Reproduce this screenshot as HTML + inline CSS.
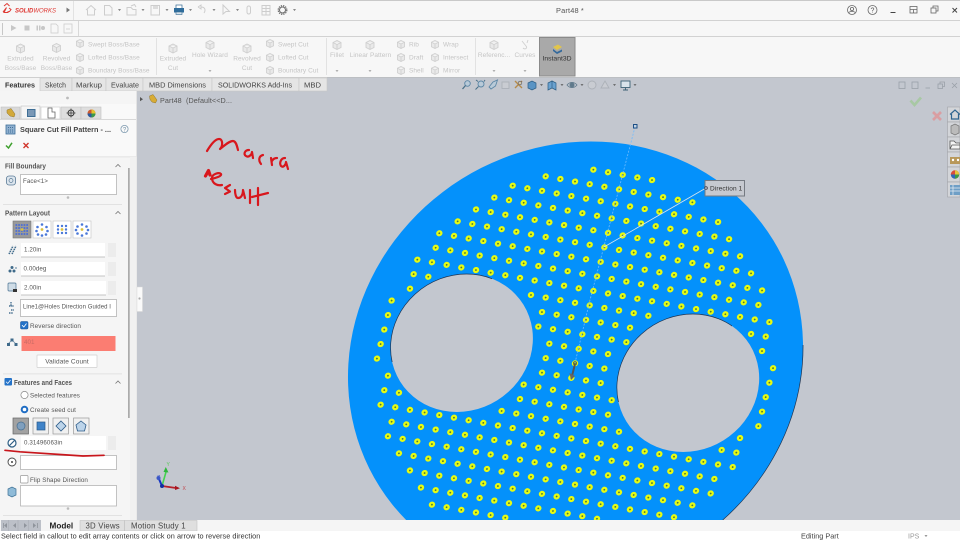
<!DOCTYPE html>
<html lang="en">
<head>
<meta charset="utf-8">
<title>Part48 - SOLIDWORKS</title>
<style>
html,body{margin:0;padding:0;width:960px;height:540px;overflow:hidden;background:#f6f6f6}
svg{display:block;position:absolute;left:0;top:0;filter:blur(.3px)}
text{font-family:"Liberation Sans",sans-serif;white-space:pre}
.r{font-size:6.500px;fill:#c5c5c5;letter-spacing:.05px}
.m{text-anchor:middle}
.tab{font-size:7.300px;fill:#444}
.b{font-size:7px;font-weight:bold;fill:#555}
.p{font-size:6.200px;fill:#555;letter-spacing:.08px}
.box{fill:#fff;stroke:#b4b4b4;stroke-width:.8}
.ic{fill:#e9e9e9;stroke:#cfcfcf;stroke-width:.9}
.hu{fill:#b9cad8;stroke:#5d87a6;stroke-width:.9}
.hg{fill:#c9ccd2;stroke:#acb1b8;stroke-width:.9}
.tb{fill:none;stroke:#cdcdcd;stroke-width:1}
.hand{fill:none;stroke:#d8171d;stroke-width:2.200;stroke-linecap:round;stroke-linejoin:round}
</style>
</head>
<body>
<svg width="960" height="540" viewBox="0 0 960 540" xmlns="http://www.w3.org/2000/svg">
<defs>
<path id="c" class="ic" d="M-4-2 0-4 4-2V3L0 5-4 3ZM-4-2 0 0 4-2M0 0V5"/>
<path id="arr" d="M-1.500-.8H1.500L0 .9Z"/>
<path id="lat" d="M5-2H9.010M2-1H12.010M0 0H14.010M-1 1H15.010M-2 2H16.010M-3 3H17.010M-4 4H18.010M-4 5H18.010M-5 6H19.010M-5 7H-3.990M3 7H11.010M18 7H19.010M-5 8h.01M4 8H10.010M19 8h.01M-6 9h.01M4 9H10.010M20 9h.01M-6 10h.01M5 10H9.010M20 10h.01M-6 11h.01M5 11H9.010M20 11h.01M-6 12h.01M5 12H9.010M20 12h.01M-6 13h.01M4 13H10.010M20 13h.01M-5 14h.01M4 14H10.010M19 14h.01M-5 15H-3.990M3 15H11.010M18 15H19.010M-5 16H19.010M-4 17H18.010M-4 18H18.010M-3 19H17.010M-2 20H16.010M-1 21H11.010M0 22H5.010" fill="none" stroke-linecap="round" stroke-dasharray=".001 .999"/>
<clipPath id="c1"><rect x="380" y="260" width="112" height="102"/></clipPath>
<clipPath id="c2"><rect x="610" y="305" width="122" height="97"/></clipPath>
<clipPath id="c3"><rect x="715" y="345" width="95" height="175"/></clipPath>
</defs>

<!-- window background -->
<rect width="960" height="540" fill="#f7f7f7"/>

<!-- viewport -->
<rect x="137" y="77" width="823" height="443" fill="#c3c7cf"/>
<g transform="matrix(1 0 -0.07 1 25.34 0)">
<path d="M417.200 520A227 220.500 0 1 1 733.800 520Z" fill="#0491fb"/>
<ellipse cx="460.400" cy="343" rx="71" ry="69" fill="#c3c7cf"/>
<ellipse cx="689.500" cy="383" rx="71" ry="69" fill="#c3c7cf"/>
</g>
<g clip-path="url(#c1)"><g transform="matrix(1 0 -0.07 1 25.34 0)"><ellipse cx="460.400" cy="343" rx="71" ry="69" fill="none" stroke="#1f3350" stroke-width=".7"/></g></g>
<g clip-path="url(#c2)"><g transform="matrix(1 0 -0.07 1 25.34 0)"><ellipse cx="689.500" cy="383" rx="71" ry="69" fill="none" stroke="#1f3350" stroke-width=".7"/></g></g>
<g clip-path="url(#c3)"><g transform="matrix(1 0 -0.07 1 25.34 0)"><path d="M417.200 520A227 220.500 0 1 1 733.800 520" fill="none" stroke="#1f3350" stroke-width=".7"/></g></g>
<g transform="matrix(14.67 2.6 -3.67 14.5 512.67 185.67)">
<use href="#lat" stroke="#e6fb12" stroke-width=".42"/>
<use href="#lat" stroke="#4f7a3a" stroke-width=".12"/>
</g>

<!-- direction handles -->
<path d="M635 127 590 300 575 363" fill="none" stroke="#70bcff" stroke-width=".8" stroke-dasharray="2 1.5"/>
<rect x="633.500" y="124.500" width="3.500" height="3.500" fill="#c3d4e4" stroke="#1d4f86"/>
<path d="M604 247 706 188" stroke="#d8e4ee" stroke-width=".8"/>
<rect x="705" y="180.500" width="39.500" height="15.500" fill="#c6c9d0" stroke="#757a82"/>
<circle cx="706" cy="188" r="1.300" fill="#fff" stroke="#445"/>
<text x="710" y="190.500" font-size="6.500" fill="#333" letter-spacing=".12">Direction 1</text>
<path d="M575 364 572 376" stroke="#555" stroke-width="2"/>
<path d="M569.500 373 575 376 571 380Z" fill="#666"/>
<circle cx="575" cy="363.300" r="1.600" fill="none" stroke="#555" stroke-width=".8"/>

<!-- handwriting -->
<g class="hand">
<path d="M207 151C210 146 215 139 219 139C223 139 223 146 220 149C224 146 229 141 233 141C236 141 237 146 238 150"/>
<path d="M249 150C245 150 243 154 246 156C249 158 252 154 252 152L253 158"/>
<path d="M263 155C259 156 258 160 261 164"/>
<path d="M271 158 272 165M272 161C273 159 275 158 277 158"/>
<path d="M285 158C281 158 279 163 281 166C283 168 286 165 286 162L288 169"/>
<path d="M205.500 176 208.500 170.500 210 175" stroke-width="3.200"/>
<path d="M211 179C216 178 222 176 221 174C219 172 212 174 212 178C212 184 218 186 222 185"/>
<path d="M230 185 225 188 230 191.500 225 194"/>
<path d="M235 190C235 194 236 198 238 198C241 198 243 195 243 190L245 198"/>
<path d="M250 190 250 203"/>
<path d="M258 188 258 205M252 197 268 193"/>
</g>

<!-- triad -->
<path d="M162 486 166 472" stroke="#44d24f" stroke-width="1.600"/>
<path d="M163.500 472 168.500 472.500 165.800 467Z" fill="#2fb63c"/>
<path d="M162 486 176 488" stroke="#b6202a" stroke-width="1.800"/>
<path d="M175 485.800 180 488.300 175 490Z" fill="#a81620"/>
<path d="M162 486 159 479" stroke="#1636c4" stroke-width="2"/>
<circle cx="162" cy="486" r="2" fill="#1130a0"/>
<circle cx="158.500" cy="478" r="2" fill="#3c58c8"/>
<text x="166.500" y="466" font-size="5" fill="#5ac85a">Y</text>
<text x="182.500" y="490" font-size="5" fill="#c0454a">X</text>
<text x="157" y="479" font-size="5" fill="#3c58c8">Z</text>

<!-- top lines -->
<rect width="960" height="1" fill="#c9c9c9"/>
<rect y="20" width="960" height="1" fill="#d2d2d2"/>
<rect y="36" width="960" height="1" fill="#d2d2d2"/>
<rect x="73" y="1" width="1" height="19" fill="#e2e2e2"/>
<rect x="78" y="21" width="1" height="15" fill="#d8d8d8"/>

<!-- logo -->
<g fill="none" stroke="#df3a33" stroke-width="1">
<path d="M4 6 7 3.500 9.500 6M3 12 6.500 7.500 4 12.500H8.500M9 8 11 9.500 9.500 11.500 7.500 11.800"/>
</g>
<text x="15" y="12.500" font-size="6.600" font-weight="bold" font-style="italic" fill="#de3530" textLength="41" lengthAdjust="spacingAndGlyphs">SOLID<tspan font-weight="normal">WORKS</tspan></text>
<path d="M66.500 7.500 70 10 66.500 12.500Z" fill="#777"/>

<!-- quick access icons -->
<g class="tb">
<path d="M86 10 91 5.500 96 10M87.500 9.500V15H94.500V9.500"/>
<path d="M104.500 5.500H109.500L112 8V15H104.500Z"/>
<path d="M127 7.500H131L133 9.500H136V15H127ZM131 6 134.500 4.500 136 7"/>
<rect x="151" y="5.500" width="8.500" height="9.500"/>
<path d="M198 7 201 5 201 9 198 7M201 7C205 7 206 10 204 13"/>
<path d="M223 5 223 14 226 11.500 229.500 11.500Z"/>
<rect x="247" y="6" width="3.500" height="8" rx="1.700"/>
<path d="M262 5.500H270V15H262ZM262 8.500H270M262 11.500H270M266 5.500V15"/>
</g>
<g fill="#dcdcdc"><rect x="153" y="6" width="5" height="3"/></g>
<g fill="#666">
<use href="#arr" x="119.500" y="10"/><use href="#arr" x="143" y="10"/><use href="#arr" x="167" y="10"/>
<use href="#arr" x="190.500" y="10"/><use href="#arr" x="214" y="10"/><use href="#arr" x="237.500" y="10"/><use href="#arr" x="294.500" y="10"/>
</g>
<g>
<rect x="176" y="5" width="6" height="3.500" fill="#fff" stroke="#356a92" stroke-width=".7"/>
<rect x="174" y="8" width="10" height="4.500" fill="#2f6d9c"/>
<rect x="176" y="12" width="6" height="2.500" fill="#d7e3ec" stroke="#356a92" stroke-width=".6"/>
</g>
<circle cx="282.500" cy="10" r="3" fill="none" stroke="#666" stroke-width="1"/>
<circle cx="282.500" cy="10" r="4.300" fill="none" stroke="#666" stroke-width="1.200" stroke-dasharray="1.300 1"/>

<text x="570" y="13" class="m" font-size="7.400" fill="#555" letter-spacing=".15">Part48 *</text>

<!-- window controls -->
<g fill="none" stroke="#666" stroke-width=".8">
<circle cx="852" cy="10" r="4.500"/><circle cx="852" cy="9" r="1.600"/><path d="M849 12.500C850 11 854 11 855 12.500"/>
<circle cx="872.500" cy="10" r="4.500"/>
<rect x="910" y="6.500" width="7" height="6.500"/><path d="M910 9.500H917M913.500 9.500V13"/>
<rect x="931" y="8" width="5" height="5"/><path d="M933 8V6H938V11H936"/>
</g>
<text x="872.500" y="12.500" class="m" font-size="7" fill="#555">?</text>
<rect x="890.500" y="12" width="5" height="1" fill="#444"/>
<path d="M952.500 8 957 12.500M957 8 952.500 12.500" stroke="#444" stroke-width="1"/>

<!-- toolbar 2 -->
<rect x="2" y="23" width=".8" height="12" fill="#bbb"/>
<g fill="#c7c7c7">
<path d="M11 25 16.500 28 11 31Z"/><rect x="24.500" y="25.500" width="5" height="5"/>
<rect x="36.500" y="25.500" width="1.500" height="5"/><rect x="39" y="25.500" width="1.500" height="5"/><circle cx="43" cy="28" r="2"/>
</g>
<g fill="none" stroke="#ccc" stroke-width=".8">
<path d="M51 24H56L58 26V33H51Z"/><path d="M64 24H72V33H64ZM66 29 70 29"/>
</g>

<!-- ribbon separators and bottom -->
<rect y="77" x="0" width="327" height="1" fill="#cfcfcf"/>
<rect y="77" x="327" width="633" height="1" fill="#bcbfc3"/>
<rect x="156" y="38" width="1" height="37" fill="#e2e2e2"/>
<rect x="475" y="38" width="1" height="37" fill="#e2e2e2"/>
<rect x="326" y="38" width="1" height="37" fill="#e2e2e2"/>

<!-- ribbon icons -->
<use href="#c" x="20.500" y="48"/><use href="#c" x="56.500" y="47.500"/>
<use href="#c" transform="translate(80 43) scale(.9)"/><use href="#c" transform="translate(80 57) scale(.9)"/><use href="#c" transform="translate(80 70) scale(.9)"/>
<use href="#c" x="173" y="48"/><use href="#c" x="210" y="44.500"/><use href="#c" x="247" y="48"/>
<use href="#c" transform="translate(270 43) scale(.9)"/><use href="#c" transform="translate(270 57) scale(.9)"/><use href="#c" transform="translate(270 70) scale(.9)"/>
<use href="#c" x="337" y="44.500"/><use href="#c" x="370" y="44.500"/>
<use href="#c" transform="translate(401 44) scale(.9)"/><use href="#c" transform="translate(401 57) scale(.9)"/><use href="#c" transform="translate(401 70) scale(.9)"/>
<use href="#c" transform="translate(435 44) scale(.9)"/><use href="#c" transform="translate(435 57) scale(.9)"/><use href="#c" transform="translate(435 70) scale(.9)"/>
<use href="#c" x="494" y="44.500"/>
<path d="M522 41 526 46C528 48 525 50 523 48M528 40 527 43" fill="none" stroke="#cfcfcf" stroke-width=".9"/>

<!-- ribbon text -->
<text x="20.500" y="60.500" class="r m">Extruded</text><text x="20.500" y="70" class="r m">Boss/Base</text>
<text x="56.500" y="60.500" class="r m">Revolved</text><text x="56.500" y="70" class="r m">Boss/Base</text>
<text x="88" y="46.500" class="r">Swept Boss/Base</text><text x="88" y="59.500" class="r">Lofted Boss/Base</text><text x="88" y="72.500" class="r">Boundary Boss/Base</text>
<text x="173" y="60.500" class="r m">Extruded</text><text x="173" y="70" class="r m">Cut</text>
<text x="210" y="57" class="r m">Hole Wizard</text>
<text x="247" y="60.500" class="r m">Revolved</text><text x="247" y="70" class="r m">Cut</text>
<text x="278" y="46.500" class="r">Swept Cut</text><text x="278" y="59.500" class="r">Lofted Cut</text><text x="278" y="72.500" class="r">Boundary Cut</text>
<text x="337" y="57" class="r m">Fillet</text><text x="370.500" y="57" class="r m">Linear Pattern</text>
<text x="409" y="46.500" class="r">Rib</text><text x="409" y="59.500" class="r">Draft</text><text x="409" y="72.500" class="r">Shell</text>
<text x="443" y="46.500" class="r">Wrap</text><text x="443" y="59.500" class="r">Intersect</text><text x="443" y="72.500" class="r">Mirror</text>
<text x="494" y="57" class="r m">Referenc...</text><text x="525" y="57" class="r m">Curves</text>
<g fill="#999">
<use href="#arr" x="210" y="71"/><use href="#arr" x="337" y="71"/><use href="#arr" x="370" y="71"/><use href="#arr" x="494" y="71"/><use href="#arr" x="525" y="71"/>
</g>

<!-- Instant3D -->
<rect x="539.500" y="37.500" width="35.500" height="38.500" fill="#a9a9a9" stroke="#8a8a8a"/>
<path d="M553 47 558 44.500 562 47 557 50Z" fill="#e2c54a"/><path d="M553 49 557 52 562 49.500 562 51.500 557 54 553 51Z" fill="#33699c"/>
<text x="557" y="60.500" class="m" font-size="6.800" fill="#333">Instant3D</text>

<!-- command tabs -->
<rect x="0" y="78" width="327" height="13" fill="#f4f4f4"/>
<g fill="#e5e5e5" stroke="#c6c6c6" stroke-width=".6">
<rect x="40" y="78" width="32" height="13"/><rect x="72" y="78" width="34" height="13"/><rect x="106" y="78" width="37" height="13"/>
<rect x="143" y="78" width="69" height="13"/><rect x="212" y="78" width="87" height="13"/><rect x="299" y="78" width="28" height="13"/>
</g>
<text x="5" y="87.300" font-size="7.400" font-weight="bold" fill="#333" textLength="30" lengthAdjust="spacingAndGlyphs">Features</text>
<text x="45" y="87.300" class="tab" textLength="21" lengthAdjust="spacingAndGlyphs">Sketch</text>
<text x="76" y="87.300" class="tab" textLength="26" lengthAdjust="spacingAndGlyphs">Markup</text>
<text x="111" y="87.300" class="tab" textLength="28" lengthAdjust="spacingAndGlyphs">Evaluate</text>
<text x="149" y="87.300" class="tab" textLength="57" lengthAdjust="spacingAndGlyphs">MBD Dimensions</text>
<text x="218" y="87.300" class="tab" textLength="74" lengthAdjust="spacingAndGlyphs">SOLIDWORKS Add-Ins</text>
<text x="304" y="87.300" class="tab" textLength="17" lengthAdjust="spacingAndGlyphs">MBD</text>

<!-- left panel -->
<rect x="0" y="91" width="137" height="429" fill="#f5f5f5"/>
<rect x="136" y="91" width="1" height="429" fill="#e4e4e4"/>
<circle cx="67.500" cy="98" r="1.400" fill="#bbb"/>
<rect x="0" y="104" width="136" height="53" fill="#f9f9f9"/>
<rect x="1" y="107" width="19" height="12" fill="#d9d9d9" stroke="#c0c0c0" stroke-width=".6"/>
<rect x="21" y="106" width="19" height="13" fill="#f5f5f5" stroke="#c0c0c0" stroke-width=".6"/>
<rect x="41" y="107" width="19" height="12" fill="#fff" stroke="#c9c9c9" stroke-width=".6"/>
<rect x="61" y="107" width="20" height="12" fill="#dedede" stroke="#c0c0c0" stroke-width=".6"/>
<rect x="81" y="107" width="20" height="12" fill="#dedede" stroke="#c0c0c0" stroke-width=".6"/>
<rect x="0" y="119" width="136" height=".8" fill="#d0d0d0"/>
<path d="M7 110 11 108.500 15 114 14 117 10 116 7 113Z" fill="#d2a93a" stroke="#8f7530" stroke-width=".5"/>
<rect x="27" y="109" width="8.500" height="8" fill="#3e6e95"/><path d="M28 111H34.500M28 113H34.500M28 115H34.500" stroke="#dde" stroke-width=".7"/>
<path d="M48 108H52V112H55V118H48Z" fill="none" stroke="#666" stroke-width=".8"/>
<circle cx="71" cy="113" r="3" fill="none" stroke="#333" stroke-width=".9"/><path d="M71 108.500V117.500M66.500 113H75.500" stroke="#333" stroke-width=".7"/>
<circle cx="91.500" cy="113.500" r="4" fill="#ca5a30"/><path d="M91.500 113.500V109.500A4 4 0 0 1 95.500 113.500Z" fill="#e2c230"/><path d="M91.500 113.500H95.500A4 4 0 0 1 91.500 117.500Z" fill="#3a9a4a"/><path d="M91.500 113.500V117.500A4 4 0 0 1 87.500 113.500Z" fill="#2a5aa0"/>

<!-- panel title -->
<rect x="6" y="125" width="9" height="9" fill="#8fb0cf" stroke="#3f6f9a" stroke-width=".8"/><path d="M8 127.500H13M8 130H13M8 132H13" stroke="#2a5a88" stroke-width=".8" stroke-dasharray="1 1"/>
<text x="20" y="131.800" font-size="7.400" font-weight="bold" fill="#444" textLength="91" lengthAdjust="spacingAndGlyphs">Square Cut Fill Pattern - ...</text>
<circle cx="124.500" cy="129" r="3.600" fill="none" stroke="#7f9bb0" stroke-width=".8"/><text x="124.500" y="131.500" class="m" font-size="6" fill="#6a8aa0">?</text>
<path d="M6 145.500 8.500 148 12 142.800" fill="none" stroke="#3fa02e" stroke-width="1.500"/>
<path d="M23.500 143 28.500 148M28.500 143 23.500 148" stroke="#d1362c" stroke-width="1.400"/>
<rect x="0" y="156.500" width="136" height=".8" fill="#dcdcdc"/>

<!-- scrollbar -->
<rect x="128.200" y="168" width="1.400" height="250" fill="#999"/>
<rect x="130" y="157" width="6.500" height="363" fill="#f1f1f1"/>

<!-- fill boundary -->
<text x="5" y="168.500" class="b" textLength="41" lengthAdjust="spacingAndGlyphs">Fill Boundary</text>
<path d="M115.500 167 118 164.500 120.500 167" fill="none" stroke="#777" stroke-width=".8"/>
<rect x="6.500" y="176" width="9" height="9" rx="2.500" fill="#dde6ee" stroke="#5a7a96" stroke-width=".8"/><circle cx="11" cy="180.500" r="2" fill="none" stroke="#5a7a96" stroke-width=".7"/>
<rect x="20.500" y="174.500" width="96" height="20" class="box"/>
<text x="23" y="183" class="p">Face&lt;1&gt;</text>
<circle cx="68" cy="197.500" r="1.300" fill="#bbb"/>
<rect x="3" y="204" width="119" height=".8" fill="#ddd"/>

<!-- pattern layout -->
<text x="5" y="215.500" class="b" textLength="45" lengthAdjust="spacingAndGlyphs">Pattern Layout</text>
<path d="M115.500 214 118 211.500 120.500 214" fill="none" stroke="#777" stroke-width=".8"/>
<rect x="13" y="221" width="18" height="17" fill="#9a9a9a" stroke="#777" stroke-width=".6"/>
<g fill="#fff" stroke="#c4c4c4" stroke-width=".6">
<rect x="33" y="221" width="18" height="17"/><rect x="53" y="221" width="18" height="17"/><rect x="73" y="221" width="18" height="17"/>
</g>
<path d="M15.500 225H29M15.500 228H29M15.500 231H29M15.500 234H29" stroke="#4a6ed8" stroke-width="1.800" stroke-dasharray="1.700 1" fill="none"/>
<g fill="#4a78d8">
<circle cx="42" cy="224.500" r="1.300"/><circle cx="37.500" cy="227" r="1.300"/><circle cx="46.500" cy="227" r="1.300"/><circle cx="36.500" cy="231" r="1.300"/><circle cx="47.500" cy="231" r="1.300"/><circle cx="38" cy="234.500" r="1.300"/><circle cx="46" cy="234.500" r="1.300"/><circle cx="42" cy="235.500" r="1.300"/>
<circle cx="58" cy="226" r="1.200"/><circle cx="62" cy="226" r="1.200"/><circle cx="66" cy="226" r="1.200"/><circle cx="58" cy="233" r="1.200"/><circle cx="62" cy="233" r="1.200"/><circle cx="66" cy="233" r="1.200"/><circle cx="58" cy="229.500" r="1.200"/><circle cx="66" cy="229.500" r="1.200"/>
<circle cx="82" cy="224.500" r="1.300"/><circle cx="77.500" cy="226.500" r="1.300"/><circle cx="86.500" cy="226.500" r="1.300"/><circle cx="76" cy="230" r="1.300"/><circle cx="88" cy="230" r="1.300"/><circle cx="77.500" cy="233.500" r="1.300"/><circle cx="86.500" cy="233.500" r="1.300"/><circle cx="82" cy="235.500" r="1.300"/>
</g>
<g fill="#dcc23c"><circle cx="22" cy="229.500" r="1.400"/><circle cx="42" cy="229.500" r="1.400"/><circle cx="62" cy="229.500" r="1.400"/><circle cx="82" cy="229.500" r="1.400"/></g>

<g>
<rect x="21" y="243" width="84" height="14" fill="#fff"/><rect x="21" y="256.500" width="84" height="1" fill="#c4c4c4"/><rect x="108" y="243" width="8" height="14" fill="#ececec"/>
<rect x="21" y="262" width="84" height="14" fill="#fff"/><rect x="21" y="275.500" width="84" height="1" fill="#c4c4c4"/><rect x="108" y="262" width="8" height="14" fill="#ececec"/>
<rect x="21" y="281" width="85" height="14" fill="#fff"/><rect x="21" y="294.500" width="85" height="1" fill="#c4c4c4"/><rect x="108" y="281" width="8" height="14" fill="#ececec"/>
<path d="M9 254 13 246M12 254 16 246" stroke="#3f6a8a" stroke-width="1.500" stroke-dasharray="1.500 .7"/>
<circle cx="10" cy="271" r="1.500" fill="#3f6a8a"/><circle cx="14" cy="271" r="1.500" fill="#3f6a8a"/><circle cx="12" cy="267.500" r="1.500" fill="#3f6a8a"/><circle cx="16" cy="268" r="1" fill="#8fa8ba"/>
<rect x="8" y="283" width="8" height="8" rx="1" fill="#cfdce6" stroke="#4a7292" stroke-width=".7"/><rect x="13" y="289" width="4" height="3" fill="#333"/>
<path d="M11 302V306M9 306H14M11 310H14M9 313H13" stroke="#4a7292" stroke-width="1.400" stroke-dasharray="1.500 .7"/>
<path d="M8 344 12 340M12 340 16 344" stroke="#6a8aa2" stroke-width=".8"/><rect x="7" y="343" width="3" height="3" fill="#3f6a8a"/><rect x="10.500" y="338.500" width="3" height="3" fill="#3f6a8a"/><rect x="14.500" y="343" width="3" height="3" fill="#3f6a8a"/>
</g>
<text x="24" y="251.500" class="p">1.20in</text>
<text x="23.500" y="270.500" class="p">0.00deg</text>
<text x="24" y="289.500" class="p">2.00in</text>
<rect x="20.500" y="299.500" width="96" height="17" class="box"/>
<text x="23" y="308.500" class="p" textLength="88" lengthAdjust="spacingAndGlyphs">Line1@Holes Direction Guided I</text>
<rect x="20.500" y="321.500" width="7.500" height="7.500" rx="1" fill="#2472c8" stroke="#184f90" stroke-width=".5"/><path d="M22 325.200 23.800 327 26.500 323.500" fill="none" stroke="#fff" stroke-width=".8"/>
<text x="30" y="328" class="p" textLength="51" lengthAdjust="spacingAndGlyphs">Reverse direction</text>
<rect x="21.500" y="336" width="94" height="15" fill="#fb7d72"/>
<text x="24" y="343.800" font-size="6.300" fill="#c96a64">401</text>
<rect x="37" y="355" width="60" height="12.500" rx=".5" fill="#fff" stroke="#cfcfcf" stroke-width=".7"/>
<text x="67" y="363.500" class="m" font-size="6.500" fill="#555" letter-spacing=".1">Validate Count</text>
<rect x="3" y="373.500" width="119" height=".8" fill="#ddd"/>

<!-- features and faces -->
<rect x="4.500" y="378" width="7.500" height="7.500" rx="1" fill="#2472c8"/><path d="M6 381.700 7.800 383.500 10.500 380" fill="none" stroke="#fff" stroke-width=".7"/>
<text x="14" y="384.800" class="b" textLength="58" lengthAdjust="spacingAndGlyphs">Features and Faces</text>
<path d="M115.500 383.500 118 381 120.500 383.500" fill="none" stroke="#777" stroke-width=".8"/>
<circle cx="24.500" cy="395" r="3.600" fill="#fff" stroke="#888" stroke-width=".7"/>
<text x="30" y="397.500" class="p" textLength="50" lengthAdjust="spacingAndGlyphs">Selected features</text>
<circle cx="24.500" cy="409.500" r="3.800" fill="#1f6dc4"/><circle cx="24.500" cy="409.500" r="1.800" fill="#fff"/>
<text x="30" y="412" class="p" textLength="46" lengthAdjust="spacingAndGlyphs">Create seed cut</text>
<rect x="13" y="418" width="15.500" height="16" fill="#a2a2a2" stroke="#666" stroke-width=".7"/>
<g fill="#f0f0f0" stroke="#9a9a9a" stroke-width=".7">
<rect x="33" y="418" width="15.500" height="16"/><rect x="53" y="418" width="15.500" height="16"/><rect x="73.500" y="418" width="15.500" height="16"/>
</g>
<circle cx="21" cy="426" r="4" fill="#7f9fbe" stroke="#476e90" stroke-width=".7"/>
<rect x="37" y="422" width="8" height="8" fill="#3f83c8" stroke="#2b5a88" stroke-width=".7"/>
<path d="M61 421 66 426 61 431 56 426Z" fill="#bcd4ea" stroke="#2b5a88" stroke-width=".8"/>
<path d="M81 421 86 425 84.500 431H77.500L76 425Z" fill="#bcd4ea" stroke="#2b5a88" stroke-width=".8"/>
<rect x="21" y="436" width="85" height="14" fill="#fff"/><rect x="108" y="436" width="8" height="14" fill="#ececec"/>
<circle cx="12" cy="443" r="4" fill="#fff" stroke="#2f5f85" stroke-width="1.200"/><path d="M9.500 445.500 14.500 440.500" stroke="#2f5f85" stroke-width="1.200"/>
<text x="24" y="444.500" class="p">0.31496063in</text>
<circle cx="12" cy="462" r="4" fill="#fff" stroke="#444" stroke-width=".9"/><circle cx="12" cy="462" r="1" fill="#444"/>
<rect x="20.500" y="455.500" width="96" height="14" class="box"/>
<path d="M5 450.300 20 451.800 33 452.700 60 454.500 83 456 104 455.300" fill="none" stroke="#c8161c" stroke-width="1.700" stroke-linecap="round"/>
<rect x="20.500" y="475.500" width="7.500" height="7.500" rx="1" fill="#fff" stroke="#999" stroke-width=".7"/>
<text x="30" y="482" class="p" textLength="58" lengthAdjust="spacingAndGlyphs">Flip Shape Direction</text>
<path d="M8 489 12 487 16 489V495L12 497 8 495Z" fill="#8fbbd8" stroke="#3f7296" stroke-width=".7"/>
<rect x="20.500" y="485.500" width="96" height="20.500" class="box"/>
<circle cx="68" cy="508.500" r="1.300" fill="#bbb"/>
<rect x="3" y="515" width="119" height=".8" fill="#ddd"/>

<!-- splitter handle -->
<rect x="137" y="287" width="5.500" height="24.500" fill="#fafafa" stroke="#d8d8d8" stroke-width=".5"/>
<circle cx="139.500" cy="298.500" r="1.100" fill="#aaa"/>

<!-- viewport header -->
<path d="M140 97 143 99.200 140 101.300Z" fill="#555"/>
<path d="M149.500 96 153 94.500 157 100 155.500 103 152 102 150 99.500Z" fill="#d8ac35" stroke="#8f7530" stroke-width=".5"/>
<text x="160" y="103" font-size="7.200" fill="#555" letter-spacing=".1">Part48  (Default&lt;&lt;D...</text>

<!-- heads up toolbar -->
<circle cx="467.500" cy="83.500" r="2.800" class="hu"/><path d="M465.500 85.500 462.500 89" stroke="#496f88" stroke-width="1.300"/>
<circle cx="481" cy="84" r="3" class="hu"/><path d="M478.500 86.500 475.500 89.500M476 80 478 81.500M485 80 484 81.500" stroke="#496f88" stroke-width="1"/>
<path d="M489 87 493 82 497.500 80 495.500 86 491 89Z" class="hu"/>
<rect x="502" y="82" width="7" height="6.500" class="hg"/>
<path d="M515 81 522 88M522 81 515 88" stroke="#b58a4a" stroke-width="1.400"/><circle cx="520" cy="83" r="1.800" fill="#d4c8a8" stroke="#556" stroke-width=".6"/>
<path d="M528 83 532 81 536 83V88L532 90 528 88Z" fill="#5a94c4" stroke="#2f5f85" stroke-width=".7"/>
<path d="M552 81 556 83V90L552 88ZM548 83 552 81V88L548 90Z" fill="#6aa2d0" stroke="#2f5f85" stroke-width=".7"/>
<circle cx="572" cy="85" r="2.500" fill="#607a8c"/><path d="M567 85C570 81.500 574 81.500 577 85 574 88.500 570 88.500 567 85Z" fill="none" stroke="#607a8c" stroke-width=".8"/>
<circle cx="592" cy="85" r="4" class="hg"/>
<path d="M601 88 605 81 609 88Z" class="hg"/>
<rect x="621" y="81" width="9" height="6.500" fill="#d9e3ea" stroke="#3e6276" stroke-width=".9"/><path d="M625.500 87.500V90M623 90H628" stroke="#3e6276" stroke-width=".9"/>
<g fill="#555"><use href="#arr" x="541.500" y="85"/><use href="#arr" x="562" y="85"/><use href="#arr" x="582" y="85"/><use href="#arr" x="614.500" y="85"/><use href="#arr" x="635" y="85"/></g>

<!-- viewport controls -->
<g fill="none" stroke="#9aa0a8" stroke-width=".8">
<rect x="899" y="82" width="6" height="6.500"/><rect x="912" y="82" width="6" height="6.500"/>
<path d="M925.500 88H930"/><rect x="938" y="84" width="4.500" height="4.500"/><path d="M940 84V82H944.500V86.500H942.500"/>
<path d="M952 83 957 88M957 83 952 88"/>
</g>

<!-- confirmation -->
<path d="M910.500 100.500 914.500 105 921 97.500" fill="none" stroke="#a8c8a4" stroke-width="2.700"/>
<path d="M933 112 941 120M941 112 933 120" stroke="#d99ea2" stroke-width="2.700"/>

<!-- task pane tabs -->
<g fill="#d3d5d9" stroke="#a2a4a9" stroke-width=".6">
<rect x="947.500" y="107" width="12.500" height="15"/><rect x="947.500" y="122" width="12.500" height="15"/><rect x="947.500" y="137" width="12.500" height="15"/>
<rect x="947.500" y="152" width="12.500" height="15"/><rect x="947.500" y="167" width="12.500" height="15"/><rect x="947.500" y="182" width="12.500" height="15"/>
</g>
<path d="M950 114.500 955 110 960 114.500M951.500 114V119H958.500V114" fill="none" stroke="#2f6490" stroke-width="1.200"/>
<path d="M951 126 955 124 959 126V133L955 135 951 133Z" fill="#bbb" stroke="#777" stroke-width=".7"/>
<path d="M950 149V141H954L956 143H960V149ZM950 149 952 145H960" fill="#f4f4f4" stroke="#555" stroke-width=".8"/>
<rect x="950" y="157" width="10" height="7" fill="#b8985a"/><circle cx="953" cy="160" r="1.200" fill="#fff"/><circle cx="958" cy="160" r="1.200" fill="#fff"/>
<circle cx="955" cy="174.500" r="4.200" fill="#d94b3b"/><path d="M955 174.500V170.300A4.200 4.200 0 0 1 959.200 174.500Z" fill="#e6c33a"/><path d="M955 174.500H959.200A4.200 4.200 0 0 1 955 178.700Z" fill="#3d9a4a"/><path d="M955 174.500V178.700A4.200 4.200 0 0 1 950.800 174.500Z" fill="#2f68b8"/>
<rect x="950" y="185" width="10" height="10" fill="#6f9fc6"/><path d="M950 188H960M950 191H960M953 185V195" stroke="#e8eef4" stroke-width=".7"/>

<!-- bottom bar -->
<rect x="0" y="520" width="960" height="11" fill="#f5f5f5"/>
<rect x="1" y="520" width="40" height="11" fill="#bcc0c8"/>
<g fill="#8f949c"><path d="M7 523 4 525.500 7 528ZM3 523h.8v5H3z"/><path d="M16 523 13 525.500 16 528Z"/><path d="M24 523 27 525.500 24 528Z"/><path d="M33 523 36 525.500 33 528ZM37 523h.8v5H37z"/></g>
<path d="M8.500 520v11M18 520v11M28.500 520v11" stroke="#a6aab2" stroke-width=".5"/>
<text x="49.500" y="528.500" font-size="8.200" font-weight="bold" fill="#222">Model</text>
<rect x="80" y="520.500" width="44.500" height="10.500" fill="#dfdfdf" stroke="#bbb" stroke-width=".5"/>
<rect x="124.500" y="520.500" width="72.500" height="10.500" fill="#dfdfdf" stroke="#bbb" stroke-width=".5"/>
<text x="85.500" y="528.500" font-size="7.800" fill="#444" letter-spacing=".2">3D Views</text>
<text x="131" y="528.500" font-size="7.800" fill="#444" letter-spacing=".2">Motion Study 1</text>

<!-- status bar -->
<rect x="0" y="531" width="960" height="9" fill="#fff"/>
<text x="1" y="538.300" font-size="7.300" fill="#333" letter-spacing=".04">Select field in callout to edit array contents or click on arrow to reverse direction</text>
<text x="801" y="538.300" font-size="7.300" fill="#444">Editing Part</text>
<text x="908" y="538.300" font-size="7" fill="#999">IPS</text>
<use href="#arr" x="926" y="536" fill="#777"/>
</svg>
</body>
</html>
